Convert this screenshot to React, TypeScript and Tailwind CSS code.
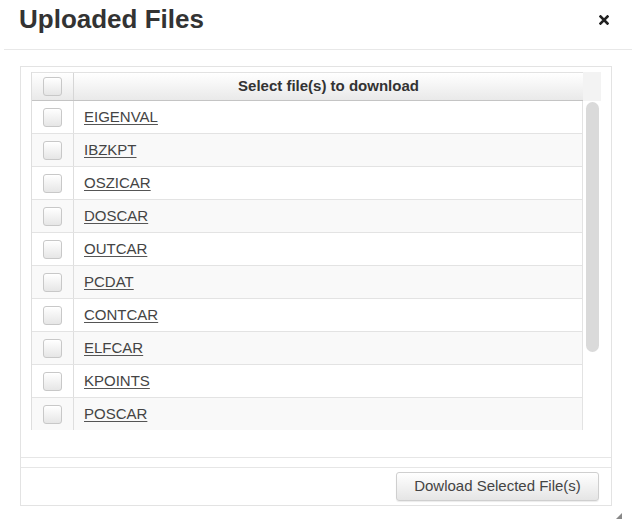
const FILES = ['EIGENVAL', 'IBZKPT', 'OSZICAR', 'DOSCAR', 'OUTCAR', 'PCDAT', 'CONTCAR', 'ELFCAR', 'KPOINTS', 'POSCAR'];

function Checkbox() {
  return (
    <div className="w-[19px] h-[19px] rounded-[3px] border border-[#c8c8c8] bg-gradient-to-b from-white to-[#e6e6e6] shadow-[inset_0_1px_0_#fff]" />
  );
}

export default function App() {
  return (
    <div className="w-[636px] h-[525px] bg-white text-[#333] font-['Liberation_Sans',Arial,sans-serif] overflow-hidden">
      {/* Dialog header */}
      <div className="mx-[4px] h-[50px] border-b border-[#e8e8e8] pl-[15px] pr-[23px] pt-[6px] flex justify-between items-start">
        <h1 className="text-[26px] leading-[26px] font-bold text-[#333]">Uploaded Files</h1>
        <button className="mt-[9px] w-[10px] h-[10px] flex items-center justify-center">
          <svg width="10" height="10" viewBox="0 0 10 10">
            <path d="M1.5 1.5 L8.5 8.5 M8.5 1.5 L1.5 8.5" stroke="#222" strokeWidth="2.6" strokeLinecap="square" />
          </svg>
        </button>
      </div>

      {/* Body */}
      <div className="ml-[20px] mt-[16px] w-[592px] border border-[#e3e3e3]">
        <div className="pt-[5px] px-[10px] pb-[27px] border-b border-[#e6e6e6]">
          <div className="flex">
            <div className="w-[552px] border-l border-[#dedede]">
              {/* table header */}
              <div className="flex h-[29px] border-t border-b border-t-[#e2e2e2] border-b-[#c4c4c4] bg-gradient-to-b from-white to-[#e9e9e9]">
                <div className="w-[42px] border-r border-[#d6d6d6] flex items-center justify-center">
                  <Checkbox />
                </div>
                <div className="flex-1 flex items-center justify-center text-[15px] font-bold text-[#333]">
                  Select file(s) to download
                </div>
              </div>
              {/* table body */}
              <div className="h-[329px] overflow-hidden">
                {FILES.map((name, i) => (
                  <div
                    key={name}
                    className={`flex h-[33px] border-b border-[#e3e3e3] ${i % 2 === 1 ? 'bg-[#f9f9f9]' : 'bg-white'}`}
                  >
                    <div className="w-[42px] border-r border-[#dedede] flex items-center justify-center">
                      <Checkbox />
                    </div>
                    <div className="flex-1 flex items-center pl-[10px] border-r border-[#e3e3e3]">
                      <a className="text-[15px] text-[#444] underline underline-offset-[2px] decoration-[#555]">{name}</a>
                    </div>
                  </div>
                ))}
              </div>
            </div>
            {/* scrollbar */}
            <div className="w-[18px] flex flex-col">
              <div className="h-[29px] bg-[#f3f3f3]" />
              <div className="pt-[1px] pl-[3px]">
                <div className="w-[13px] h-[250px] rounded-full bg-[#dadada]" />
              </div>
            </div>
          </div>
        </div>
        <div className="h-[9px]" />
        <div className="border-t border-[#e6e6e6] pt-[4px] pb-[4px] pr-[12px] flex justify-end">
          <button className="w-[203px] h-[29px] rounded-[3px] border border-[#cfcfcf] bg-gradient-to-b from-white to-[#e5e5e5] shadow-[0_1px_1px_rgba(0,0,0,0.08)] text-[15px] text-[#444]">
            Dowload Selected File(s)
          </button>
        </div>
      </div>

      {/* resize grip */}
      <div className="w-[622px] flex justify-end mt-[7px]">
        <svg width="6" height="6" viewBox="0 0 6 6">
          <path d="M6 0 L6 6 L0 6 Z" fill="#888" />
        </svg>
      </div>
    </div>
  );
}
